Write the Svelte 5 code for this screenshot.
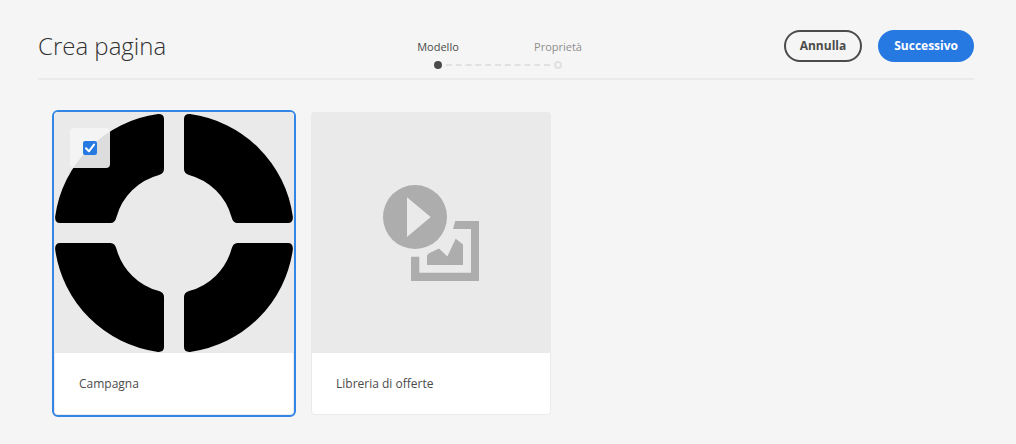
<script lang="ts">
  const steps = [
    { label: 'Modello', current: true },
    { label: 'Proprietà', current: false },
  ];
  let selected = $state(true);
</script>

<div class="page">
  <header>
    <h1>Crea pagina</h1>
    <ol class="steps">
      {#each steps as step}
        <li class:current={step.current} aria-current={step.current ? 'step' : undefined}>
          <span>{step.label}</span>
          <i class="dot"></i>
        </li>
      {/each}
    </ol>
    <div class="actions">
      <button type="button">Annulla</button>
      <button type="button" class="primary">Successivo</button>
    </div>
  </header>

  <main>
    <article class="card" class:selected>
      <div class="preview">
        <svg class="ring" viewBox="0 0 240 240" aria-hidden="true">
          <defs>
            <path id="segment" d="M104 1.100Q110 .8 110 6V56Q110 60.500 105 62A60 60 0 0 0 62.500 104Q61 110 56.500 110H6Q1 110 1.100 104A120 120 0 0 1 104 1.100Z" />
          </defs>
          <use href="#segment" />
          <use href="#segment" transform="matrix(-1 0 0 1 240 0)" />
          <use href="#segment" transform="matrix(1 0 0 -1 0 240)" />
          <use href="#segment" transform="matrix(-1 0 0 -1 240 240)" />
        </svg>
        <label class="pick">
          <input type="checkbox" aria-label="Campagna" bind:checked={selected} />
          <svg viewBox="0 0 14 14" aria-hidden="true"><path d="M3 7.300 5.900 10.300 11 3.600" /></svg>
        </label>
      </div>
      <h2>Campagna</h2>
    </article>

    <article class="card">
      <div class="preview">
        <svg class="media" viewBox="0 0 96 96" aria-hidden="true">
          <path fill-rule="evenodd" d="M32 0a32 32 0 1 1 0 64a32 32 0 0 1 0-64ZM24 12.300V52L47.700 32Z" />
          <path d="M72.300 36H96V96H28V71.700H36.300V87.700H88V44H70Z" />
          <path d="M44 80V70.500L46 68.300 56 63.500 64.300 71.500 72.700 53.700 80 59.500V80Z" />
        </svg>
      </div>
      <h2>Libreria di offerte</h2>
    </article>
  </main>
</div>

<style>
  :global(body) {
    margin: 0;
    background: #f5f5f5;
  }
  .page {
    padding: 0 42px 27px 38px;
    font-family: 'Open Sans', sans-serif;
    color: #4b4b4b;
  }
  header {
    display: grid;
    grid-template-columns: 1fr auto 1fr;
    align-items: center;
    height: 78px;
    border-bottom: 2px solid #eaeaea;
  }
  h1 {
    margin: 0;
    padding-top: 14px;
    font-size: 24px;
    line-height: 32px;
    font-weight: 300;
    color: #323232;
  }
  .steps {
    display: flex;
    margin: 0 16px 0 0;
    padding: 30px 0 0;
    list-style: none;
  }
  .steps li {
    position: relative;
    display: flex;
    flex-direction: column;
    align-items: center;
    gap: 6px;
    width: 120px;
    font-size: 11px;
    line-height: 16px;
    color: #8e8e8e;
  }
  .steps li.current {
    color: #4b4b4b;
  }
  .dot {
    box-sizing: border-box;
    width: 8px;
    height: 8px;
    border: 2px solid #e1e1e1;
    border-radius: 50%;
  }
  .current .dot {
    border-color: #4b4b4b;
    background: #4b4b4b;
  }
  .steps li:first-child::after {
    content: '';
    position: absolute;
    left: 68px;
    bottom: 3px;
    width: 104px;
    border-top: 2px dashed #e1e1e1;
  }
  .actions {
    display: flex;
    justify-content: flex-end;
    gap: 16px;
    padding-top: 14px;
  }
  button {
    height: 32px;
    padding: 0 14px;
    border: 2px solid #4b4b4b;
    border-radius: 16px;
    background: transparent;
    color: #4b4b4b;
    font: 700 12px/16px 'Open Sans', sans-serif;
  }
  .primary {
    border-color: #2779e2;
    background: #2779e2;
    color: #fff;
  }
  main {
    display: flex;
    flex-wrap: wrap;
    gap: 17px;
    padding: 32px 16px 0;
  }
  .card {
    box-sizing: border-box;
    width: 240px;
    border-radius: 4px;
    background: #fff;
    box-shadow: inset 0 0 0 1px #eaeaea;
  }
  .card.selected {
    outline: 2px solid #3386e5;
  }
  .preview {
    position: relative;
    display: flex;
    align-items: center;
    justify-content: center;
    height: 241px;
    border-radius: 4px 4px 0 0;
    background: #eaeaea;
  }
  .ring {
    width: 240px;
    height: 240px;
  }
  .media {
    width: 96px;
    height: 96px;
    fill: #adadad;
  }
  .pick {
    position: absolute;
    top: 16px;
    left: 16px;
    display: grid;
    place-items: center;
    place-content: center;
    width: 40px;
    height: 40px;
    border-radius: 4px;
    background: rgb(245 245 245 / 90%);
  }
  .pick input,
  .pick svg {
    grid-area: 1 / 1;
    width: 14px;
    height: 14px;
    margin: 0;
  }
  .pick input {
    appearance: none;
    border: 2px solid #6e6e6e;
    border-radius: 2px;
  }
  .pick input:checked {
    border-color: #2779e2;
    background: #2779e2;
  }
  .pick svg {
    pointer-events: none;
    fill: none;
    stroke: #fff;
    stroke-width: 2;
    stroke-linecap: round;
    stroke-linejoin: round;
  }
  .pick input:not(:checked) + svg {
    visibility: hidden;
  }
  h2 {
    margin: 0;
    padding: 21px 25px;
    font-size: 12px;
    line-height: 20px;
    font-weight: 400;
  }
</style>
